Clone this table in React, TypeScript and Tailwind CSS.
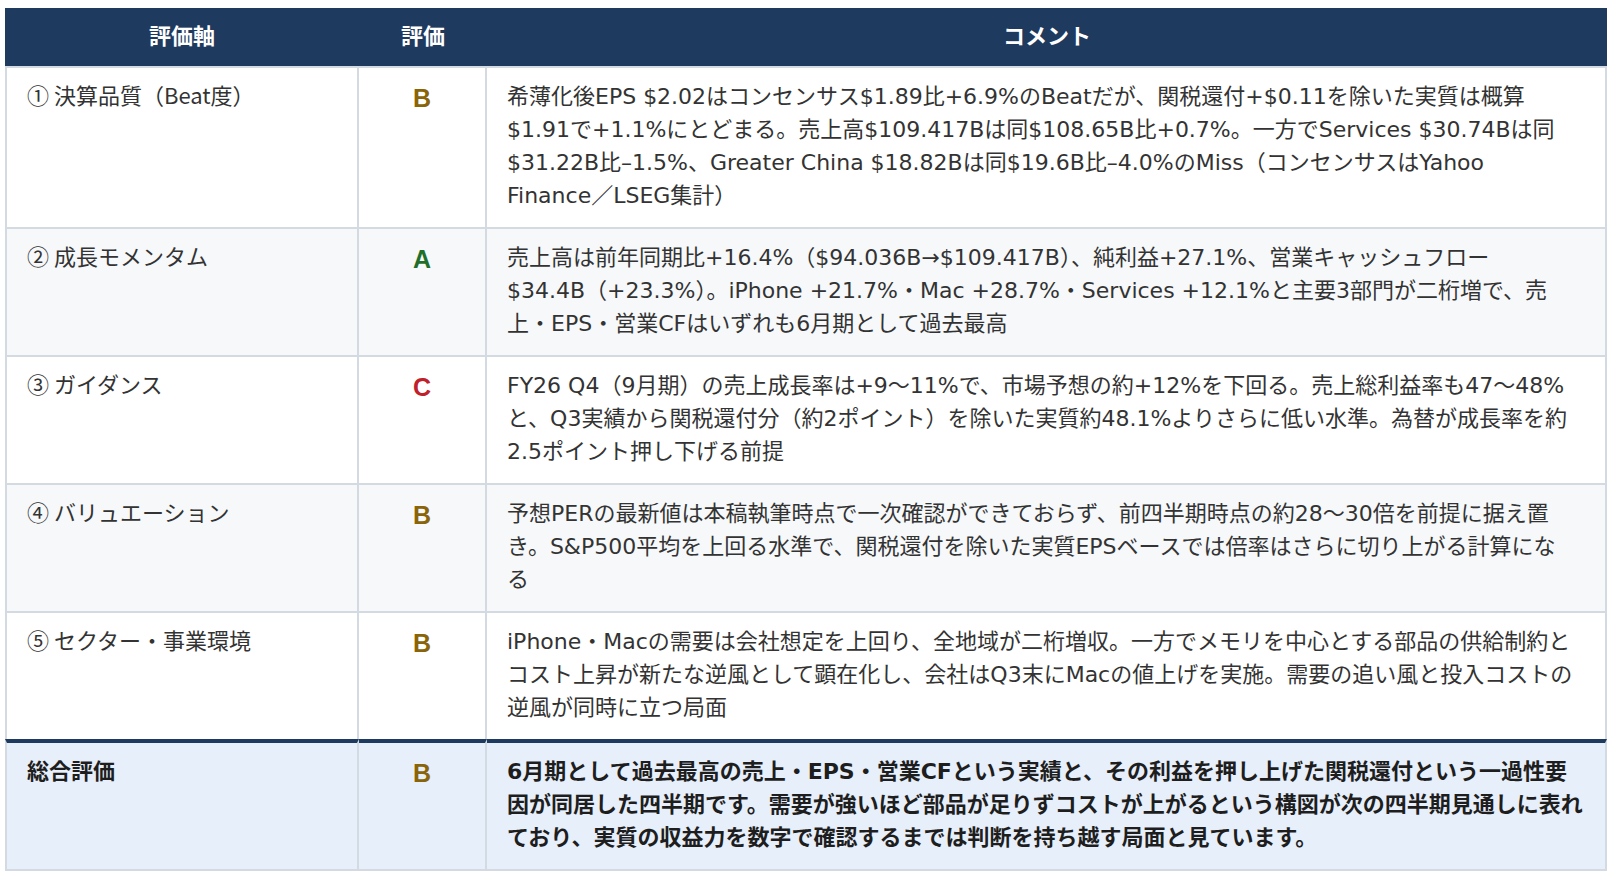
import React from "react";

type Row = {
  label: string;
  grade: "A" | "B" | "C";
  lines: string[];
  bg: string;
};

const rows: Row[] = [
  {
    label: "① 決算品質（Beat度）",
    grade: "B",
    bg: "bg-white",
    lines: [
      "希薄化後EPS $2.02はコンセンサス$1.89比+6.9%のBeatだが、関税還付+$0.11を除いた実質は概算",
      "$1.91で+1.1%にとどまる。売上高$109.417Bは同$108.65B比+0.7%。一方でServices $30.74Bは同",
      "$31.22B比–1.5%、Greater China $18.82Bは同$19.6B比–4.0%のMiss（コンセンサスはYahoo",
      "Finance／LSEG集計）",
    ],
  },
  {
    label: "② 成長モメンタム",
    grade: "A",
    bg: "bg-[#f6f8fa]",
    lines: [
      "売上高は前年同期比+16.4%（$94.036B→$109.417B）、純利益+27.1%、営業キャッシュフロー",
      "$34.4B（+23.3%）。iPhone +21.7%・Mac +28.7%・Services +12.1%と主要3部門が二桁増で、売",
      "上・EPS・営業CFはいずれも6月期として過去最高",
    ],
  },
  {
    label: "③ ガイダンス",
    grade: "C",
    bg: "bg-white",
    lines: [
      "FY26 Q4（9月期）の売上成長率は+9〜11%で、市場予想の約+12%を下回る。売上総利益率も47〜48%",
      "と、Q3実績から関税還付分（約2ポイント）を除いた実質約48.1%よりさらに低い水準。為替が成長率を約",
      "2.5ポイント押し下げる前提",
    ],
  },
  {
    label: "④ バリュエーション",
    grade: "B",
    bg: "bg-[#f6f8fa]",
    lines: [
      "予想PERの最新値は本稿執筆時点で一次確認ができておらず、前四半期時点の約28〜30倍を前提に据え置",
      "き。S&P500平均を上回る水準で、関税還付を除いた実質EPSベースでは倍率はさらに切り上がる計算にな",
      "る",
    ],
  },
  {
    label: "⑤ セクター・事業環境",
    grade: "B",
    bg: "bg-white",
    lines: [
      "iPhone・Macの需要は会社想定を上回り、全地域が二桁増収。一方でメモリを中心とする部品の供給制約と",
      "コスト上昇が新たな逆風として顕在化し、会社はQ3末にMacの値上げを実施。需要の追い風と投入コストの",
      "逆風が同時に立つ局面",
    ],
  },
];

const summaryLines = [
  "6月期として過去最高の売上・EPS・営業CFという実績と、その利益を押し上げた関税還付という一過性要",
  "因が同居した四半期です。需要が強いほど部品が足りずコストが上がるという構図が次の四半期見通しに表れ",
  "ており、実質の収益力を数字で確認するまでは判断を持ち越す局面と見ています。",
];

function Grade({ g }: { g: "A" | "B" | "C" }) {
  const color =
    g === "A" ? "text-[#1f6f2b]" : g === "C" ? "text-[#c0202a]" : "text-[#8a6408]";
  return (
    <span
      className={`font-['Liberation_Sans',Arial,sans-serif] text-[25px] font-bold leading-[33px] ${color}`}
    >
      {g}
    </span>
  );
}

export default function App() {
  return (
    <div className="min-h-[880px] w-full bg-white pl-[5px] pt-[8px] font-['DejaVu_Sans','Noto_Sans_CJK_JP',sans-serif] text-[22px] leading-[33px] text-[#333333]">
      <div className="grid w-[1602px] grid-cols-[354px_128px_1120px]">
        {/* header */}
        <div className="bg-[#1f3a5f] pb-[15px] pt-[10px] text-center font-['Noto_Sans_CJK_JP',sans-serif] font-bold text-white">
          評価軸
        </div>
        <div className="bg-[#1f3a5f] pb-[15px] pt-[10px] text-center font-['Noto_Sans_CJK_JP',sans-serif] font-bold text-white">
          評価
        </div>
        <div className="bg-[#1f3a5f] pb-[15px] pt-[10px] text-center font-['Noto_Sans_CJK_JP',sans-serif] font-bold text-white">
          コメント
        </div>

        {rows.map((r, i) => (
          <React.Fragment key={i}>
            <div
              className={`${r.bg} border-l-2 border-r-2 border-t-2 border-[#d3dae1] pb-[17px] pl-[20px] pr-[16px] pt-[10px] font-['Noto_Sans_CJK_JP',sans-serif]`}
            >
              {r.label}
            </div>
            <div
              className={`${r.bg} border-r-2 border-t-2 border-[#d3dae1] pb-[13px] pt-[14px] text-center`}
            >
              <Grade g={r.grade} />
            </div>
            <div
              className={`${r.bg} border-r-2 border-t-2 border-[#d3dae1] pb-[15px] pl-[20px] pt-[12px]`}
            >
              {r.lines.map((l, j) => (
                <div key={j} className="whitespace-nowrap">
                  {l}
                </div>
              ))}
            </div>
          </React.Fragment>
        ))}

        {/* summary */}
        <div className="border-b-2 border-l-2 border-r-2 border-t-4 border-[#d3dae1] border-t-[#1f3a5f] bg-[#e7effa] pb-[17px] pl-[20px] pt-[10px] font-['Noto_Sans_CJK_JP',sans-serif] font-bold text-[#1e1e1e]">
          総合評価
        </div>
        <div className="border-b-2 border-r-2 border-t-4 border-[#d3dae1] border-t-[#1f3a5f] bg-[#e7effa] pb-[13px] pt-[14px] text-center">
          <Grade g="B" />
        </div>
        <div className="border-b-2 border-r-2 border-t-4 border-[#d3dae1] border-t-[#1f3a5f] bg-[#e7effa] pb-[15px] pl-[20px] pt-[12px] font-bold text-[#1e1e1e]">
          {summaryLines.map((l, j) => (
            <div key={j} className="whitespace-nowrap">
              {l}
            </div>
          ))}
        </div>
      </div>
    </div>
  );
}
